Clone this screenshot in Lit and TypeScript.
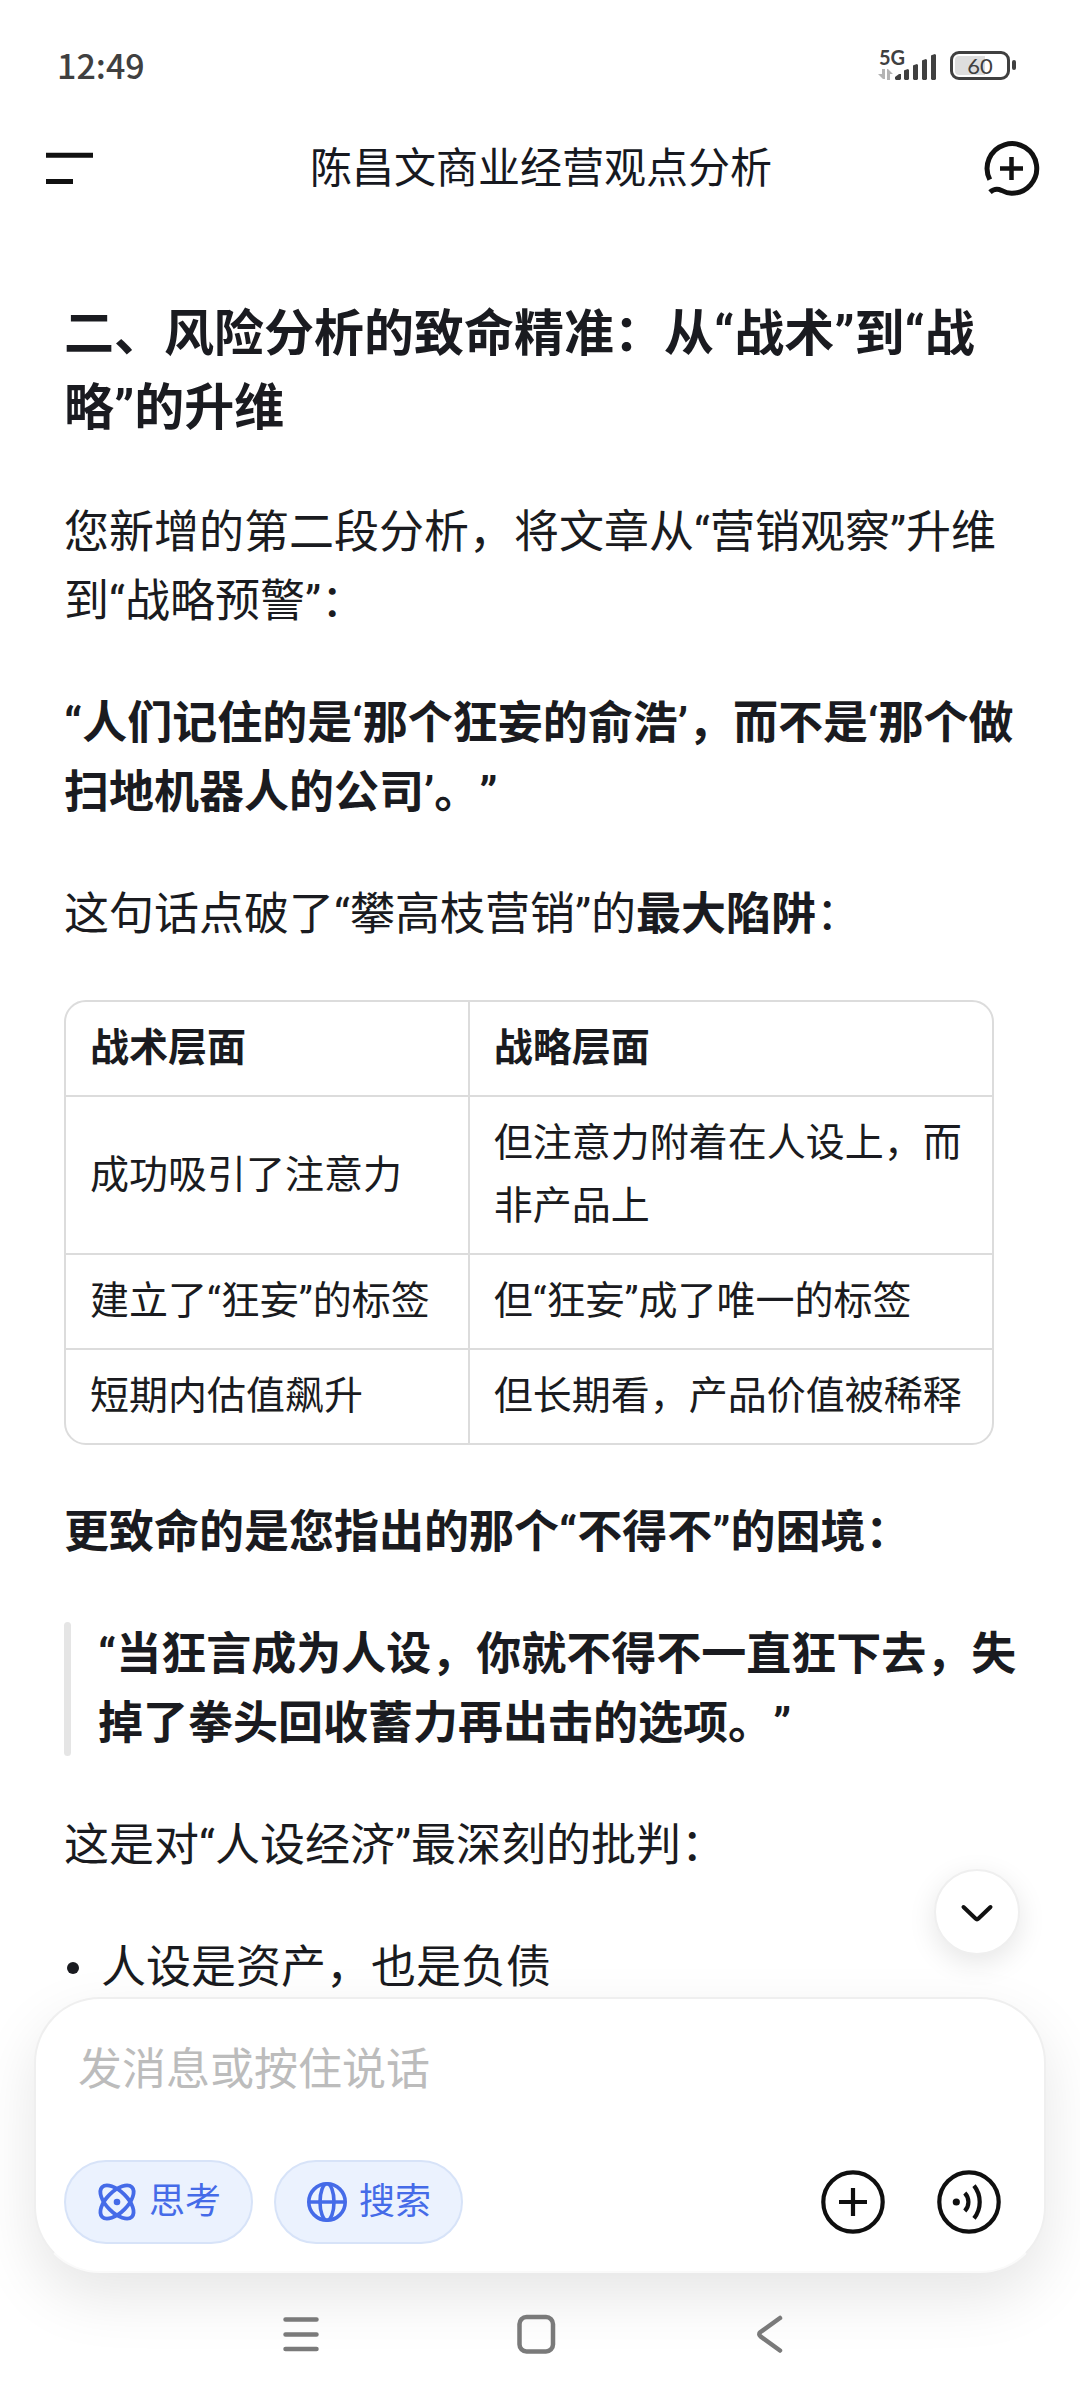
import { LitElement, html, css, svg } from "lit";
import { customElement, state } from "lit/decorators.js";

const fontStack = css`Roboto, "Noto Sans CJK SC", sans-serif`;

interface Row {
  tactic: string;
  strategy: string;
}

const ROWS: Row[] = [
  { tactic: "成功吸引了注意力", strategy: "但注意力附着在人设上，而非产品上" },
  { tactic: "建立了“狂妄”的标签", strategy: "但“狂妄”成了唯一的标签" },
  { tactic: "短期内估值飙升", strategy: "但长期看，产品价值被稀释" },
];

@customElement("status-bar")
class StatusBar extends LitElement {
  static styles = css`
    :host {
      display: flex;
      align-items: center;
      justify-content: space-between;
      height: 132px;
      box-sizing: border-box;
      padding: 0 64px 2px 57px;
      color: #404040;
    }
    .time {
      font-family: "Noto Sans CJK SC", sans-serif;
      font-size: 34px;
      line-height: 48px;
      font-weight: 500;
    }
    .right {
      display: flex;
      align-items: center;
      gap: 12px;
    }
    .signal {
      display: block;
    }
    .network {
      font: bold 20px Lato, sans-serif;
    }
    .battery {
      display: flex;
      align-items: center;
      gap: 2px;
    }
    .cell {
      display: grid;
      place-items: center;
      width: 60px;
      height: 29px;
      box-sizing: border-box;
      border: 3px solid #404040;
      border-radius: 9px;
      padding: 2px;
    }
    .level {
      width: 100%;
      height: 19px;
      border-radius: 4px;
      background: linear-gradient(90deg, #dedede 60%, transparent 60%);
      font: 22px/19px Lato, sans-serif;
      text-align: center;
    }
    .cap {
      width: 4px;
      height: 10px;
      border-radius: 2px;
      background: #404040;
    }
  `;

  render() {
    return html`
      <span class="time">12:49</span>
      <div class="right">
        <svg class="signal" width="60" height="48" viewBox="0 -8 60 48" aria-label="5G">
          <text class="network" x="1" y="16" fill="#404040">5G</text>
          <g fill="#b4b4b4">
            <path d="M4 20h3v10H5l-5-5h4z" />
            <path d="M9 31V20h1l5 5h-3v6z" />
          </g>
          <g fill="#404040">
            <path d="M17 30V28l4-3h2v5l-1 1h-4z" />
            <path d="M26 30v-8q0-1 1-1l3-1 1 1v9l-1 1h-3z" />
            <path d="M35 30V17q0-1 1-1l3-1 1 1v14l-1 1h-3z" />
            <path d="M44 30V12q0-1 1-1l3-1 1 1v19l-1 1h-3z" />
            <path d="M53 30V7q0-1 1-1l3-1 1 1v24l-1 1h-3z" />
          </g>
        </svg>
        <div class="battery">
          <div class="cell"><div class="level">60</div></div>
          <div class="cap"></div>
        </div>
      </div>
    `;
  }
}

@customElement("title-bar")
class TitleBar extends LitElement {
  static styles = css`
    :host {
      display: flex;
      align-items: center;
      justify-content: space-between;
      height: 72px;
      padding: 0 38px 0 40px;
    }
    .title {
      margin: 0;
      padding-top: 2px;
      font: 400 42px/60px ${fontStack};
      color: #17191f;
    }
    .icon {
      display: block;
      border: 0;
      padding: 0;
      background: none;
      color: #111;
      cursor: pointer;
    }
    .icon svg {
      display: block;
    }
  `;

  render() {
    return html`
      <button class="icon" aria-label="菜单">
        <svg width="60" height="60" viewBox="0 0 60 60" stroke="currentColor" stroke-width="5">
          <path d="M6 17.3h47M6 43.6h27" />
        </svg>
      </button>
      <h1 class="title">陈昌文商业经营观点分析</h1>
      <button class="icon" aria-label="新对话">
        <svg width="60" height="60" viewBox="0 0 60 60" fill="none" stroke="currentColor" stroke-width="5">
          <path d="M7.800 41.600A24.800 24.800 0 1 1 29.500 55.200C25.500 55.200 22.500 54 19.500 52.400C15.500 50.400 12 50.600 8 54.200" />
          <path d="M29.500 19v23M18 30.500h23" stroke-width="4.500" />
        </svg>
      </button>
    `;
  }
}

@customElement("message-body")
class MessageBody extends LitElement {
  static styles = css`
    :host {
      display: block;
      padding: 93px 60px 0 64px;
      font: 400 45px/69px ${fontStack};
      color: #1a1b20;
      text-spacing-trim: space-all;
    }
    .heading,
    .para,
    .quote,
    .list {
      margin: 0 0 53px;
    }
    .heading {
      font-size: 50px;
      line-height: 74px;
      font-weight: 700;
    }
    .strong {
      font-weight: 700;
    }
    .lead {
      margin-bottom: 51px;
    }
    .frame {
      margin: 0 26px 53px 0;
      border: 2px solid #dcdcdc;
      border-radius: 22px;
      overflow: hidden;
    }
    .grid {
      width: 100%;
      border-collapse: collapse;
      table-layout: fixed;
      font-size: 39px;
      line-height: 63px;
    }
    .tactic {
      width: 43.5%;
    }
    .cell {
      padding: 15px 24px;
      text-align: left;
      vertical-align: middle;
      font-weight: inherit;
    }
    .cell + .cell {
      border-left: 2px solid #dcdcdc;
    }
    .row + .row {
      border-top: 2px solid #dcdcdc;
    }
    .head {
      font-weight: 700;
    }
    .quote {
      display: flex;
      gap: 27px;
      font-weight: 700;
    }
    .bar {
      flex: none;
      width: 7px;
      margin: 2px 0;
      border-radius: 4px;
      background: #e5e5e5;
    }
    .list {
      padding: 0;
      list-style: none;
    }
    .item {
      display: flex;
      align-items: center;
      gap: 22px;
    }
    .item::before {
      content: "";
      width: 12px;
      height: 12px;
      margin-left: 3px;
      border-radius: 50%;
      background: #1a1b20;
    }
  `;

  render() {
    return html`
      <h2 class="heading">二、风险分析的致命精准：从“战术”到“战略”的升维</h2>
      <p class="para">您新增的第二段分析，将文章从“营销观察”升维到“战略预警”：</p>
      <p class="para strong">“人们记住的是‘那个狂妄的俞浩’，而不是‘那个做扫地机器人的公司’。”</p>
      <p class="para lead">这句话点破了“攀高枝营销”的<strong class="strong">最大陷阱</strong>：</p>
      <div class="frame">
        <table class="grid">
          <colgroup>
            <col class="tactic" />
            <col />
          </colgroup>
          <tbody>
            <tr class="row head">
              <th class="cell" scope="col">战术层面</th>
              <th class="cell" scope="col">战略层面</th>
            </tr>
            ${ROWS.map(
              (r) => html`<tr class="row">
                <td class="cell">${r.tactic}</td>
                <td class="cell">${r.strategy}</td>
              </tr>`,
            )}
          </tbody>
        </table>
      </div>
      <p class="para strong">更致命的是您指出的那个“不得不”的困境：</p>
      <blockquote class="quote">
        <span class="bar"></span>
        <span>“当狂言成为人设，你就不得不一直狂下去，失掉了拳头回收蓄力再出击的选项。”</span>
      </blockquote>
      <p class="para">这是对“人设经济”最深刻的批判：</p>
      <ul class="list">
        <li class="item">人设是资产，也是负债</li>
      </ul>
    `;
  }
}

const atomIcon = svg`
  <g fill="none" stroke="currentColor" stroke-width="3.800">
    <ellipse cx="20" cy="20" rx="21" ry="10.500" transform="rotate(45 20 20)" />
    <ellipse cx="20" cy="20" rx="21" ry="10.500" transform="rotate(-45 20 20)" />
  </g>
  <circle cx="20" cy="20" r="3.300" fill="currentColor" />`;

const globeIcon = svg`
  <g fill="none" stroke="currentColor" stroke-width="3.600">
    <circle cx="20" cy="20" r="18.200" />
    <ellipse cx="20" cy="20" rx="7" ry="18.200" />
    <path d="M2 20h36" />
  </g>`;

@customElement("message-composer")
class MessageComposer extends LitElement {
  @state() private think = true;
  @state() private search = true;

  static styles = css`
    :host {
      display: block;
      padding: 0 34px;
      font-family: ${fontStack};
    }
    .card {
      display: flex;
      flex-direction: column;
      gap: 55px;
      box-sizing: border-box;
      padding: 36px 43px 27px 28px;
      border: 2px solid #efefef;
      border-bottom-color: #fafafa;
      border-radius: 66px;
      background: #fff;
      box-shadow: 0 24px 60px rgba(0, 0, 0, 0.1);
    }
    .field {
      height: 70px;
      box-sizing: border-box;
      margin: 0 14px;
      border: 0;
      padding: 0;
      outline: 0;
      background: none;
      font: 400 44px/70px ${fontStack};
      color: #1a1b20;
    }
    .field::placeholder {
      color: #bcbcbc;
      opacity: 1;
    }
    .tools {
      display: flex;
      align-items: center;
      gap: 21px;
    }
    .chip {
      display: flex;
      align-items: center;
      gap: 12px;
      height: 84px;
      box-sizing: border-box;
      padding: 0 30px 0 31px;
      border: 2px solid #e2e2e2;
      border-radius: 42px;
      background: #fff;
      font: 400 36px/48px ${fontStack};
      color: #222;
      cursor: pointer;
    }
    .chip[aria-pressed="true"] {
      border-color: #d7e3f8;
      background: #ebf2fe;
      color: #456be8;
    }
    .chip svg,
    .round svg {
      display: block;
      overflow: visible;
    }
    .actions {
      display: flex;
      gap: 52px;
      margin-left: auto;
    }
    .round {
      border: 0;
      padding: 0;
      background: none;
      color: #0f0f0f;
      cursor: pointer;
    }
  `;

  render() {
    return html`
      <div class="card">
        <input class="field" type="text" placeholder="发消息或按住说话" aria-label="发消息或按住说话" />
        <div class="tools">
          <button class="chip" aria-pressed=${this.think} @click=${() => (this.think = !this.think)}>
            <svg width="40" height="40" viewBox="0 0 40 40">${atomIcon}</svg>思考
          </button>
          <button class="chip" aria-pressed=${this.search} @click=${() => (this.search = !this.search)}>
            <svg width="40" height="40" viewBox="0 0 40 40">${globeIcon}</svg>搜索
          </button>
          <div class="actions">
            <button class="round" aria-label="添加">
              <svg width="64" height="64" viewBox="0 0 64 64" fill="none" stroke="currentColor" stroke-width="4.200">
                <circle cx="32" cy="32" r="29.700" />
                <path d="M32 18v28M18 32h28" />
              </svg>
            </button>
            <button class="round" aria-label="语音">
              <svg width="64" height="64" viewBox="0 0 64 64" fill="none" stroke="currentColor" stroke-width="4.200">
                <circle cx="32" cy="32" r="29.700" />
                <circle cx="19.300" cy="32" r="3.600" fill="currentColor" stroke="none" />
                <path d="M27.800 23A13 13 0 0 1 27.800 41" />
                <path d="M37 15.600A26.400 26.400 0 0 1 37 48.400" />
              </svg>
            </button>
          </div>
        </div>
      </div>
    `;
  }
}

@customElement("system-nav")
class SystemNav extends LitElement {
  static styles = css`
    :host {
      display: flex;
      justify-content: center;
      align-items: center;
      gap: 193px;
      height: 127px;
      padding: 0 8px 5px 0;
      box-sizing: border-box;
    }
    .key {
      border: 0;
      padding: 0;
      background: none;
      color: #7a7a7a;
    }
    .key svg {
      display: block;
    }
  `;

  render() {
    const key = (label: string, shape: unknown) => html`
      <button class="key" aria-label=${label}>
        <svg
          width="42"
          height="42"
          viewBox="0 0 42 42"
          fill="none"
          stroke="currentColor"
          stroke-width="4.500"
          stroke-linecap="round"
          stroke-linejoin="round"
        >
          ${shape}
        </svg>
      </button>
    `;
    return html`
      ${key("最近任务", svg`<path d="M5.500 6.500h31M5.500 21.500h31M5.500 36h31" />`)}
      ${key("主屏幕", svg`<rect x="4.500" y="4" width="33.500" height="34.500" rx="7" />`)}
      ${key("返回", svg`<path d="M30 5L10.500 19Q8 21.200 10.500 23.400L30 37.500" />`)}
    `;
  }
}

@customElement("app-root")
class AppRoot extends LitElement {
  static styles = css`
    :host {
      display: block;
    }
    .screen {
      display: grid;
      grid-template-columns: minmax(0, 1fr);
      grid-template-rows: auto minmax(0, 1fr) auto;
      height: 100vh;
      overflow: hidden;
      background: #fff;
    }
    .dock {
      position: relative;
    }
    .down {
      position: absolute;
      right: 60px;
      bottom: calc(100% + 42px);
      display: grid;
      place-items: center;
      width: 86px;
      height: 86px;
      padding: 0;
      border: 2px solid #efefef;
      border-radius: 50%;
      background: #fff;
      box-shadow: 0 8px 28px rgba(0, 0, 0, 0.1);
      color: #111;
      cursor: pointer;
    }
  `;

  render() {
    return html`
      <div class="screen" lang="zh-CN">
        <header>
          <status-bar></status-bar>
          <title-bar></title-bar>
        </header>
        <main><message-body></message-body></main>
        <footer class="dock">
          <button class="down" aria-label="滚动到底部">
            <svg
              width="36"
              height="36"
              viewBox="0 0 36 36"
              fill="none"
              stroke="currentColor"
              stroke-width="4"
              stroke-linecap="round"
              stroke-linejoin="round"
            >
              <path d="M4.500 13L16.500 24.500Q18 26 19.500 24.500L31.500 13" />
            </svg>
          </button>
          <message-composer></message-composer>
          <system-nav></system-nav>
        </footer>
      </div>
    `;
  }
}
